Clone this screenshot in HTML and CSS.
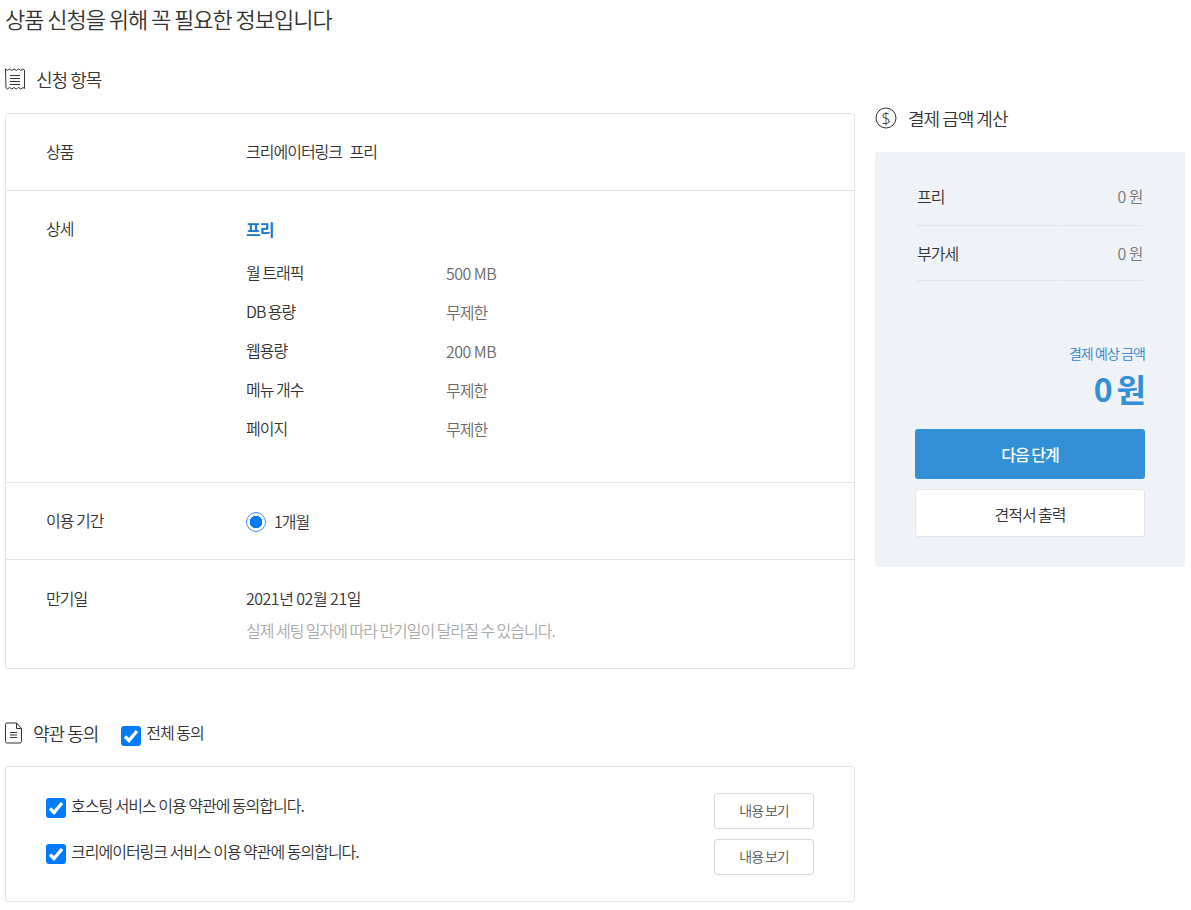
FILE: index.html
```html
<!DOCTYPE html>
<html lang="ko">
<head>
<meta charset="utf-8">
<title>상품 신청</title>
<link rel="stylesheet" href="styles.css">
</head>
<body>
<div class="page">
  <main class="main">
    <h1 class="title">상품 신청을 위해 꼭 필요한 정보입니다</h1>
    <h2 class="head head-items">
      <svg class="ic-receipt" width="20" height="22" viewBox="0 0 20 22" fill="none" stroke="#333" stroke-width="1"><path d="M0.500 1l2 1.500 2-1.500 2.300 1.500 2.200-1.500 2.300 1.500 2.200-1.500 2.300 1.500 2.200-1.500 1.500 1v18.500l-1.500-1-2.200 1.500-2.300-1.500-2.200 1.500-2.300-1.500-2.200 1.500-2.300-1.500-2 1.500-1.500-1z"/><path d="M5 7.500h10M5 10.500h10M5 13.500h10M5 16.500h10"/></svg>
      <span>신청 항목</span>
    </h2>
    <section class="card">
      <div class="row row-product"><div class="label">상품</div><div class="value">크리에이터링크&nbsp;&nbsp; 프리</div></div>
      <div class="row row-detail">
        <div class="label">상세</div>
        <div class="value">
          <div class="plan">프리</div>
          <dl class="specs">
            <div class="spec"><dt>월 트래픽</dt><dd class="digits">500 MB</dd></div>
            <div class="spec"><dt>DB 용량</dt><dd>무제한</dd></div>
            <div class="spec"><dt>웹용량</dt><dd class="digits">200 MB</dd></div>
            <div class="spec"><dt>메뉴 개수</dt><dd>무제한</dd></div>
            <div class="spec"><dt>페이지</dt><dd>무제한</dd></div>
          </dl>
        </div>
      </div>
      <div class="row row-period">
        <div class="label">이용 기간</div>
        <label class="value radio"><span class="radio-dot"></span>1개월</label>
      </div>
      <div class="row row-expiry">
        <div class="label">만기일</div>
        <div class="value">
          <div class="date">2021년 02월 21일</div>
          <div class="note">실제 세팅 일자에 따라 만기일이 달라질 수 있습니다.</div>
        </div>
      </div>
    </section>
    <div class="terms-head">
      <h2 class="head head-terms">
        <svg width="18" height="22" viewBox="0 0 18 22" fill="none" stroke="#333" stroke-width="1"><path d="M0.500 2.500a1.500 1.500 0 0 1 1.500-1.500h9.500l5 5.500v13a1.500 1.500 0 0 1-1.500 1.500h-13a1.500 1.500 0 0 1-1.500-1.500z"/><path d="M11.500 1v5.500h5"/><path d="M5 10.500h7M5 13h7M5 15.500h7" stroke-width="1.200"/></svg>
        <span>약관 동의</span>
      </h2>
      <label class="check check-all"><span class="box"><svg width="16" height="14" viewBox="0 0 16 14" fill="none" stroke="#fff" stroke-width="3.400"><path d="M2 7.500l4 4 8-9.500"/></svg></span>전체 동의</label>
    </div>
    <section class="card terms">
      <div class="term">
        <label class="check"><span class="box"><svg width="16" height="14" viewBox="0 0 16 14" fill="none" stroke="#fff" stroke-width="3.400"><path d="M2 7.500l4 4 8-9.500"/></svg></span>호스팅 서비스 이용 약관에 동의합니다.</label>
        <button class="view" type="button">내용 보기</button>
      </div>
      <div class="term">
        <label class="check"><span class="box"><svg width="16" height="14" viewBox="0 0 16 14" fill="none" stroke="#fff" stroke-width="3.400"><path d="M2 7.500l4 4 8-9.500"/></svg></span>크리에이터링크 서비스 이용 약관에 동의합니다.</label>
        <button class="view" type="button">내용 보기</button>
      </div>
    </section>
  </main>
  <aside class="side">
    <h2 class="head head-calc">
      <svg width="22" height="22" viewBox="0 0 22 22" fill="none" stroke="#333" stroke-width="1"><circle cx="11" cy="11" r="10"/><text x="11" y="16.500" text-anchor="middle" class="dollar">$</text></svg>
      <span>결제 금액 계산</span>
    </h2>
    <div class="panel">
      <table class="calc">
        <tr class="calc-first"><td>프리</td><td class="num">0 원</td></tr>
        <tr class="calc-second"><td>부가세</td><td class="num">0 원</td></tr>
      </table>
      <div class="total-label">결제 예상 금액</div>
      <div class="total">0 원</div>
      <button class="btn-next" type="button">다음 단계</button>
      <button class="btn-print" type="button">견적서 출력</button>
    </div>
  </aside>
</div>
</body>
</html>
```
FILE: styles.css
```css
* { box-sizing: border-box; }
html, body { margin: 0; padding: 0; background: #fff; }
body {
  font-family: "Noto Sans CJK KR", "Noto Sans", sans-serif;
  font-size: 16px;
  font-weight: 350;
  line-height: 22px;
  color: #333;
  letter-spacing: -1px;
  word-spacing: -1px;
}
button, dd, dl, dt, h1, h2 { margin: 0; padding: 0; font: inherit; letter-spacing: inherit; word-spacing: inherit; }
.page { display: flex; gap: 20px; padding-left: 5px; width: 1191px; height: 910px; overflow: hidden; }
.main { width: 850px; flex: none; }
.side { width: 310px; flex: none; padding-top: 106px; }
.title { font-size: 22px; line-height: 30px; padding-top: 3px; height: 33px; color: #333; word-spacing: -1.400px; }
.head { display: flex; align-items: center; font-size: 18px; line-height: 24px; }
.head svg { flex: none; }
.head-items { margin-top: 34px; height: 24px; gap: 11px; margin-bottom: 22px; }
.head-calc { height: 24px; gap: 11px; margin-bottom: 22px; }
.head-terms { gap: 10px; }
.terms-head { display: flex; align-items: center; gap: 23px; margin-top: 51px; height: 26px; margin-bottom: 20px; }
.card { border: 1px solid #e4e4e4; border-radius: 3px; width: 850px; }
.row { display: flex; padding: 0 40px; border-bottom: 1px solid #e4e4e4; }
.row:last-child { border-bottom: 0; }
.label { width: 200px; flex: none; }
.row-product { height: 77px; padding-top: 26px; }
.row-detail { height: 292px; padding-top: 26px; }
.row-period { height: 77px; padding-top: 26px; }
.row-expiry { height: 108px; padding-top: 27px; }
.plan { font-weight: 700; color: #1b78c8; padding-top: 1px; }
.specs { margin-top: 20px; }
.spec { display: flex; height: 39px; padding-top: 1px; }
.spec dt { width: 200px; flex: none; }
.spec dd { color: #6b6b6b; padding-top: 1px; }
.spec dd.digits { letter-spacing: -0.500px; }
.radio { display: flex; align-items: center; gap: 8px; height: 22px; margin-top: 1px; }
.radio-dot { width: 20px; height: 20px; margin-top: 2px; border-radius: 50%; border: 1.500px solid #3d95ff; background: radial-gradient(circle, #007bff 0 6px, #fff 6.500px); }
.date { letter-spacing: -0.500px; }
.note { margin-top: 10px; color: #aaa; }
.terms { height: 136px; padding: 26px 40px 0; }
.term { display: flex; justify-content: space-between; height: 46px; }
.check { display: flex; align-items: flex-start; gap: 5px; line-height: 24px; }
.box { width: 20px; height: 20px; margin-top: 5px; background: #007bff; border-radius: 3px; display: flex; align-items: center; justify-content: center; flex: none; }
.check-all { height: 26px; }
.check-all .box { margin-top: 6px; }
.view { width: 100px; height: 36px; padding-bottom: 2px; background: #fff; border: 1px solid #d8d8d8; border-radius: 3px; font-size: 14px; color: #555; }
.panel { height: 415px; background: #eff2f7; border-radius: 3px; padding: 0 40px; }
.calc { width: 230px; border-collapse: separate; border-spacing: 2px; table-layout: fixed; }
.calc td { border-bottom: 1px solid #e3e5e8; padding: 0; color: #333; }
.calc td.num { width: 84px; text-align: right; color: #777; letter-spacing: -0.500px; }
.calc-first td { height: 72px; padding-top: 12px; }
.calc-second td { height: 53px; padding-bottom: 2px; }
.total-label { margin-top: 60px; font-size: 14px; line-height: 20px; text-align: right; color: #2d86cc; word-spacing: -0.500px; }
.total { font-size: 32px; font-weight: 700; line-height: 38px; text-align: right; color: #3190d6; margin-top: 6px; word-spacing: -3px; }
.btn-next { display: block; width: 230px; height: 50px; margin-top: 22px; background: #3190d6; border: 0; border-radius: 3px; color: #fff; font-weight: 500; }
.btn-print { display: block; width: 230px; height: 48px; margin-top: 10px; padding-top: 2px; background: #fff; border: 1px solid #e3e5e8; border-radius: 3px; color: #333; }
.dollar { font-family: "Noto Sans", sans-serif; font-weight: 300; font-size: 16px; fill: #333; stroke: none; letter-spacing: 0; }
```
